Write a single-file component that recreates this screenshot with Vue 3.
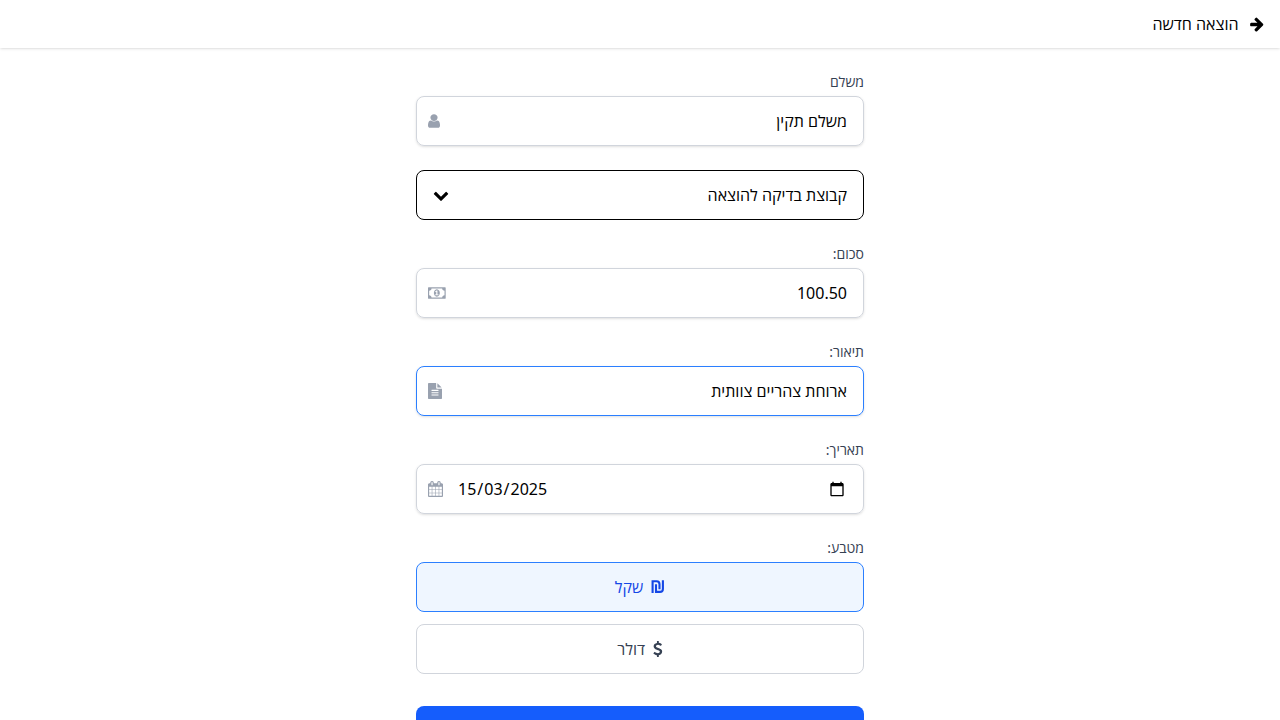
<script setup>
const icons = {
  arrow: {
    w: 1792,
    d: 'M1600 960q0 54-37 91l-651 651q-39 37-91 37-51 0-90-37l-75-75q-38-38-38-91t38-91l293-293h-704q-52 0-84.5-37.5t-32.5-90.5v-128q0-53 32.5-90.5t84.5-37.5h704l-293-294q-38-36-38-90t38-90l75-75q38-38 90-38 53 0 91 38l651 651q37 35 37 90z',
  },
  chevron: {
    w: 1792,
    d: 'M1683 808l-742 741q-19 19-45 19t-45-19l-742-741q-19-19-19-45.5t19-45.5l166-165q19-19 45-19t45 19l531 531 531-531q19-19 45-19t45 19l166 165q19 19 19 45.5t-19 45.5z',
  },
  user: {
    x: 256,
    w: 1280,
    px: 12,
    d: 'M1536 1399q0 109-62.5 187t-150.5 78h-854q-88 0-150.5-78t-62.5-187q0-85 8.5-160.5t31.5-152 58.5-131 94-89 134.5-34.5q131 128 313 128t313-128q76 0 134.5 34.5t94 89 58.5 131 31.5 152 8.5 160.5zm-256-887q0 159-112.5 271.5t-271.5 112.5-271.5-112.5-112.5-271.5 112.5-271.5 271.5-112.5 271.5 112.5 112.5 271.5z',
  },
  money: {
    w: 1920,
    px: 17.7,
    d: 'M768 1152h384v-96h-128v-448h-114l-148 137 77 80q42-37 55-57h2v288h-128v96zm512-256q0 70-21 142t-59.5 134-101.5 101-138 39-138-39-101.5-101-59.5-134-21-142 21-142 59.5-134 101.5-101 138-39 138 39 101.5 101 59.5 134 21 142zm512 256v-512q-106 0-181-75t-75-181h-1152q0 106-75 181t-181 75v512q106 0 181 75t75 181h1152q0-106 75-181t181-75zm128-832v1152q0 26-19 45t-45 19h-1792q-26 0-45-19t-19-45v-1152q0-26 19-45t45-19h1792q26 0 45 19t19 45z',
  },
  file: {
    x: 128,
    w: 1536,
    px: 14,
    d: 'M1596 476q14 14 28 36h-472v-472q22 14 36 28zm-476 164h544v1056q0 40-28 68t-68 28h-1344q-40 0-68-28t-28-68v-1600q0-40 28-68t68-28h800v544q0 40 28 68t68 28zm160 736v-64q0-14-9-23t-23-9h-704q-14 0-23 9t-9 23v64q0 14 9 23t23 9h704q14 0 23-9t9-23zm0-256v-64q0-14-9-23t-23-9h-704q-14 0-23 9t-9 23v64q0 14 9 23t23 9h704q14 0 23-9t9-23zm0-256v-64q0-14-9-23t-23-9h-704q-14 0-23 9t-9 23v64q0 14 9 23t23 9h704q14 0 23-9t9-23z',
  },
  calendar: {
    x: 64,
    w: 1664,
    px: 15,
    d: 'M192 1664h288v-288h-288v288zm352 0h320v-288h-320v288zm-352-352h288v-320h-288v320zm352 0h320v-320h-320v320zm-352-384h288v-288h-288v288zm736 736h320v-288h-320v288zm-384-736h320v-288h-320v288zm768 736h288v-288h-288v288zm-384-352h320v-320h-320v320zm-352-864v-288q0-13-9.5-22.5t-22.5-9.5h-64q-13 0-22.5 9.5t-9.5 22.5v288q0 13 9.5 22.5t22.5 9.5h64q13 0 22.5-9.5t9.5-22.5zm736 864h288v-320h-288v320zm-384-384h320v-288h-320v288zm384 0h288v-288h-288v288zm32-480v-288q0-13-9.5-22.5t-22.5-9.5h-64q-13 0-22.5 9.5t-9.5 22.5v288q0 13 9.5 22.5t22.5 9.5h64q13 0 22.5-9.5t9.5-22.5zm384-64v1280q0 52-38 90t-90 38h-1408q-52 0-90-38t-38-90v-1280q0-52 38-90t90-38h128v-96q0-66 47-113t113-47h64q66 0 113 47t47 113v96h384v-96q0-66 47-113t113-47h64q66 0 113 47t47 113v96h128q52 0 90 38t38 90z',
  },
  dollar: {
    x: 384,
    w: 1024,
    px: 9.6,
    d: 'M1362 1185q0 153-99.5 263.5t-258.5 136.5v175q0 14-9 23t-23 9h-135q-13 0-22.5-9.5t-9.5-22.5v-175q-66-9-127.5-31t-101.5-44.5-74-48-46.5-37.5-17.5-18q-17-21-2-41l103-135q7-10 23-12 15-2 24 9l2 2q113 99 243 125 37 8 74 8 81 0 142.5-43t61.5-122q0-28-15-53t-33.5-42-58.5-37.5-66-32-80-32.5q-39-16-61.5-25t-61.5-26.5-62.5-31-56.5-35.5-53.5-42.5-43.5-49-35.5-58-21-66.5-8.5-78q0-138 98-242t255-134v-180q0-13 9.5-22.5t22.5-9.5h135q14 0 23 9t9 23v176q57 6 110.5 23t87 33.5 63.5 37.5 39 29 15 14q17 18 5 38l-81 146q-8 15-23 16-14 3-27-7-3-3-14.5-12t-39-26.5-58.5-32-74.5-26-85.5-11.5q-95 0-155 43t-60 111q0 26 8.5 48t29.5 41.5 39.5 33 56 31 60.5 27 70 27.5q53 20 81 31.5t76 35 75.5 42.5 62 50 53 63.5 31.5 76.5 13 94z',
  },
}

const box = (i) => `${i.x || 0} 0 ${i.w} 1792`
const width = (i) => i.px || (i.w * 16) / 1792

const fields = [
  { label: 'משלם', value: 'משלם תקין', icon: icons.user },
  { select: true, value: 'קבוצת בדיקה להוצאה', icon: icons.chevron },
  { label: 'סכום:', value: '100.50', icon: icons.money },
  { label: 'תיאור:', value: 'ארוחת צהריים צוותית', icon: icons.file, focused: true },
  { label: 'תאריך:', date: ['15', '03', '2025'], icon: icons.calendar },
]
</script>

<template>
  <div class="page" dir="rtl">
    <header class="header">
      <svg :width="width(icons.arrow)" height="16" :viewBox="box(icons.arrow)"><path :d="icons.arrow.d" /></svg>
      <span>הוצאה חדשה</span>
    </header>
    <main class="form">
      <div v-for="(f, i) in fields" :key="i" class="field">
        <label v-if="f.label" class="label">{{ f.label }}</label>
        <div class="control" :class="{ select: f.select, focused: f.focused, date: f.date }">
          <template v-if="f.date">
            <svg class="picker" width="16" height="16" viewBox="0 0 24 24">
              <path d="M20 3h-1V1h-2v2H7V1H5v2H4c-1.1 0-2 .9-2 2v16c0 1.1.9 2 2 2h16c1.1 0 2-.9 2-2V5c0-1.1-.9-2-2-2zm0 18H4V8h16v13z" />
            </svg>
            <span class="value" dir="ltr"><template v-for="(part, n) in f.date" :key="n"><span v-if="n">/</span><span class="part">{{ part }}</span></template></span>
          </template>
          <span v-else class="value">{{ f.value }}</span>
          <svg class="icon" :width="width(f.icon)" height="16" :viewBox="box(f.icon)" preserveAspectRatio="none"><path :d="f.icon.d" /></svg>
        </div>
      </div>
      <div class="field">
        <label class="label">מטבע:</label>
        <div class="options">
          <button class="option active">
            <svg class="shekel" width="14" height="16" viewBox="0 0 14 16">
              <path d="M1.6 13.9V2.3H5.6Q8.5 2.3 8.5 5.2V10.2M5 5.2V12.9H9Q11.9 12.9 11.9 10V1.3" />
            </svg>
            <span>שקל</span>
          </button>
          <button class="option">
            <svg :width="width(icons.dollar)" height="16" :viewBox="box(icons.dollar)" preserveAspectRatio="none"><path :d="icons.dollar.d" /></svg>
            <span>דולר</span>
          </button>
        </div>
      </div>
      <button class="submit" aria-label="שמירה"></button>
    </main>
  </div>
</template>

<style scoped>
.page {
  height: 100vh;
  overflow: hidden;
  background: #fff;
  color: #000;
  font: 16px/24px "Noto Sans", "Open Sans", sans-serif;
}
svg {
  display: block;
  flex: none;
  fill: currentColor;
}
.header {
  height: 48px;
  box-sizing: border-box;
  padding: 0 15px;
  display: flex;
  align-items: center;
  gap: 10.5px;
  box-shadow: 0 1px 3px rgba(0, 0, 0, 0.1), 0 1px 2px -1px rgba(0, 0, 0, 0.1);
}
.form {
  width: 448px;
  margin: 24px auto 0;
  display: flex;
  flex-direction: column;
  gap: 24px;
}
.label {
  display: block;
  margin-bottom: 4px;
  font-size: 14px;
  line-height: 20px;
  color: #364153;
}
.control {
  height: 50px;
  box-sizing: border-box;
  padding: 0 16px 0 11px;
  display: flex;
  align-items: center;
  justify-content: space-between;
  border: 1px solid #d1d5dc;
  border-radius: 8px;
  box-shadow: 0 1px 3px rgba(0, 0, 0, 0.1), 0 1px 2px -1px rgba(0, 0, 0, 0.1);
}
.icon {
  color: #99a1af;
}
.select {
  border-color: #000;
  box-shadow: none;
  padding-left: 16px;
}
.select .icon {
  color: #000;
}
.focused {
  border-color: #2b7fff;
}
.date {
  padding-right: 18px;
}
.date .value {
  margin-right: auto;
  margin-left: 14px;
}
.part {
  padding: 0 1px;
}
.options {
  display: flex;
  flex-direction: column;
  gap: 12px;
}
.option {
  height: 50px;
  padding: 0;
  display: flex;
  align-items: center;
  justify-content: center;
  gap: 8px;
  border: 1px solid #d1d5dc;
  border-radius: 8px;
  background: #fff;
  color: #364153;
  font: inherit;
}
.option.active {
  border-color: #2b7fff;
  background: #eff6ff;
  color: #1447e6;
}
.shekel {
  fill: none;
  stroke: currentColor;
  stroke-width: 2.1;
}
.submit {
  flex: none;
  height: 48px;
  margin-top: 8px;
  border: 0;
  border-radius: 8px;
  background: #155dfc;
}
</style>
